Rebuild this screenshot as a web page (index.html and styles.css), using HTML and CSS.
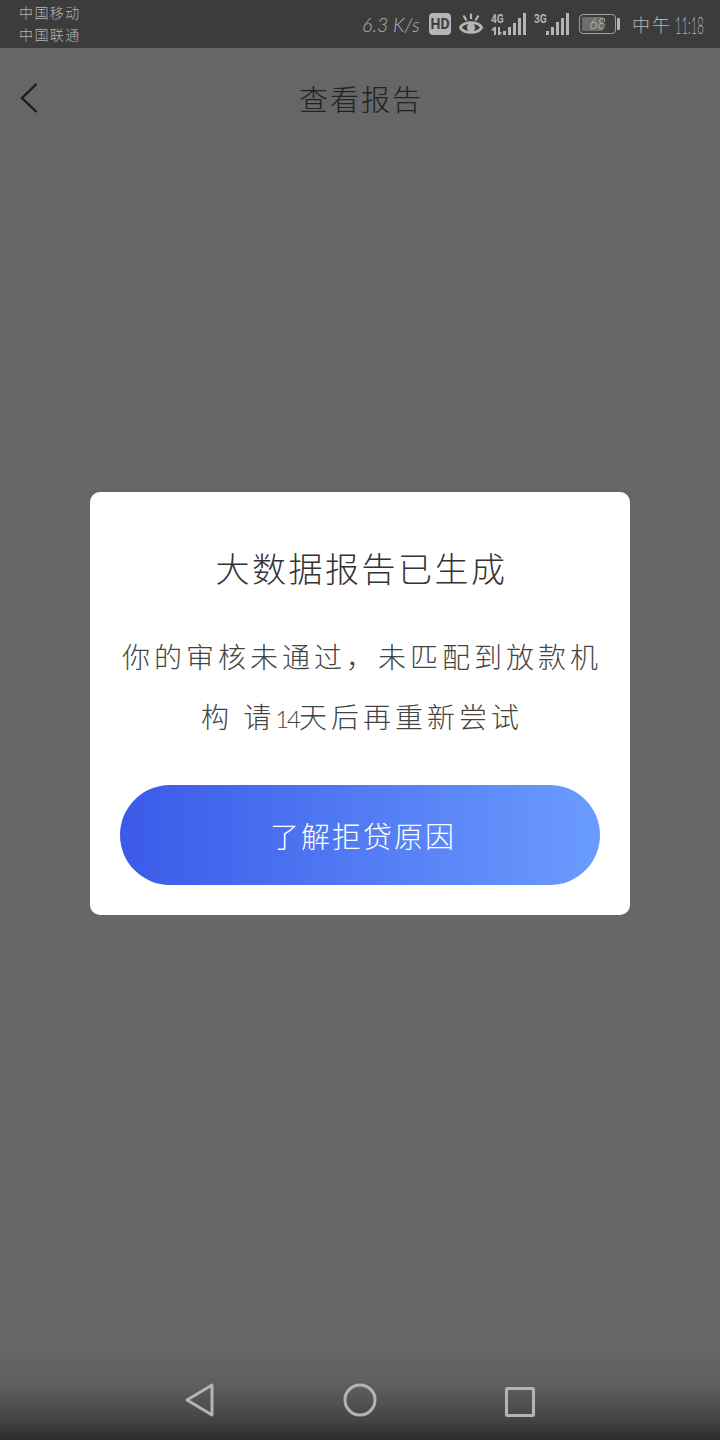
FILE: index.html
```html
<!DOCTYPE html>
<html lang="zh-CN">
<head>
<meta charset="utf-8">
<title>查看报告</title>
<link rel="stylesheet" href="styles.css">
</head>
<body>
<div class="screen">
  <header class="status">
    <div class="carriers"><span>中国移动</span><span>中国联通</span></div>
    <div class="status-right">
      <span class="speed">6.3 K/s</span>
      <span class="hd">HD</span>
      <svg class="eye" width="24" height="22" viewBox="0 0 24 22" fill="none" stroke="#b4b4b4">
        <path d="M1.2 14.5C5 8 19 8 22.8 14.5C19 21 5 21 1.2 14.5Z" stroke-width="2.6"/>
        <circle cx="12" cy="14.5" r="4" fill="#b4b4b4" stroke="none"/>
        <path d="M4.5 2.5L7.5 7.5M12 0.5V6M19.5 2.5L16.5 7.5" stroke-width="2.2"/>
      </svg>
      <span class="sim sim-4g">
        <span class="net">4G</span>
        <svg class="arrows" width="11" height="8" viewBox="0 0 11 8" fill="#b4b4b4">
          <path d="M3 0V8H5V0ZM3 0L0 3.5H3Z"/><path d="M7 0V8H9V0ZM9 8L11 5H9Z"/>
        </svg>
        <svg class="bars" width="23" height="22" viewBox="0 0 23 22" fill="#b4b4b4">
          <rect x="0" y="18" width="3" height="4"/><rect x="5" y="14" width="3" height="8"/><rect x="10" y="10" width="3" height="12"/><rect x="15" y="5" width="3" height="17"/><rect x="20" y="0" width="3" height="22"/>
        </svg>
      </span>
      <span class="sim sim-3g">
        <span class="net">3G</span>
        <svg class="bars" width="23" height="22" viewBox="0 0 23 22" fill="#b4b4b4">
          <rect x="0" y="18" width="3" height="4"/><rect x="5" y="14" width="3" height="8"/><rect x="10" y="9" width="3" height="13"/><rect x="15" y="5" width="3" height="17"/><rect x="20" y="0" width="3" height="22"/>
        </svg>
      </span>
      <span class="battery"><span class="cell"><span class="level"></span><span class="pct">68</span></span><span class="cap"></span></span>
      <span class="time"><span class="noon">中午</span><span class="clock">11:18</span></span>
    </div>
  </header>
  <nav class="topbar">
    <svg class="back" width="18" height="30" viewBox="0 0 18 30" fill="none" stroke="#1c1c1c" stroke-width="2.4">
      <path d="M16.5 1L2 15L16.5 29"/>
    </svg>
    <h1 class="page-title">查看报告</h1>
  </nav>
  <div class="overlay">
    <section class="dialog">
      <h2 class="dialog-title">大数据报告已生成</h2>
      <p class="dialog-text">你的审核未通过，未匹配到放款机构 请<span class="digits">14</span>天后再重新尝试</p>
      <button class="cta">了解拒贷原因</button>
    </section>
  </div>
  <footer class="navbar">
    <svg width="30" height="34" viewBox="0 0 30 34" fill="none" stroke="#b4b4b4" stroke-width="3" stroke-linejoin="round"><path d="M2 17L27 2V32Z"/></svg>
    <svg width="34" height="34" viewBox="0 0 34 34" fill="none" stroke="#b4b4b4" stroke-width="3"><circle cx="17" cy="17" r="15"/></svg>
    <svg width="30" height="30" viewBox="0 0 30 30" fill="none" stroke="#b4b4b4" stroke-width="3" stroke-linejoin="round"><rect x="1.5" y="1.5" width="27" height="27" rx="1"/></svg>
  </footer>
</div>
</body>
</html>
```
FILE: styles.css
```css
* { box-sizing: border-box; }
html, body { margin: 0; padding: 0; }
body {
  width: 720px;
  height: 1440px;
  overflow: hidden;
  background: #666;
  font-family: "Noto Sans CJK SC", "Noto Sans", sans-serif;
}
.screen {
  position: relative;
  width: 720px;
  height: 1440px;
  display: flex;
  flex-direction: column;
  background: #666;
}
.status {
  height: 48px;
  flex: none;
  display: flex;
  align-items: center;
  padding: 0 17px 0 19px;
  background: #3c3c3c;
  color: #b4b4b4;
}
.carriers {
  display: flex;
  flex-direction: column;
  font-size: 14px;
  line-height: 22px;
  letter-spacing: 1.4px;
  padding-bottom: 3px;
  font-weight: 300;
}
.status-right {
  margin-left: auto;
  display: flex;
  align-items: center;
  height: 100%;
}
.speed {
  width: 59px;
  margin-right: 8px;
  font-family: "Lato", sans-serif;
  font-style: italic;
  font-weight: 300;
  font-size: 19.5px;
  white-space: nowrap;
}
.hd {
  width: 22px;
  height: 22px;
  margin-right: 8px;
  background: #b4b4b4;
  border-radius: 4px;
  color: #3c3c3c;
  font-family: "Roboto", sans-serif;
  font-weight: 700;
  font-size: 14px;
  line-height: 22px;
  text-align: center;
}
.eye { margin-right: 8px; }
.sim {
  position: relative;
  height: 22px;
  display: block;
  width: 35px;
}
.sim-4g { margin-right: 8px; }
.sim-3g { margin-right: 10px; }
.net {
  position: absolute;
  left: 0;
  top: -1px;
  font-family: "Roboto", sans-serif;
  font-weight: 700;
  font-size: 13px;
  line-height: 13px;
  color: #b4b4b4;
  transform: scaleX(0.78);
  transform-origin: left center;
}
.arrows { position: absolute; left: 0; bottom: 0; }
.bars { position: absolute; right: 0; bottom: 0; }
.battery {
  display: flex;
  align-items: center;
  margin-right: 12px;
}
.cell {
  position: relative;
  width: 37px;
  height: 20px;
  border: 1.5px solid #a0a0a0;
  border-radius: 4px;
  padding: 2px;
  display: block;
}
.level {
  display: block;
  width: 68%;
  height: 100%;
  background: #6e6e6e;
  border-radius: 1px;
}
.pct {
  position: absolute;
  inset: 0;
  text-align: center;
  font-family: "Lato", sans-serif;
  font-style: italic;
  font-weight: 300;
  font-size: 15px;
  line-height: 17px;
  color: #c4c4c4;
}
.cap {
  width: 3px;
  height: 12px;
  margin-left: 1px;
  background: #b4b4b4;
  border-radius: 1px;
}
.time {
  display: flex;
  align-items: center;
  width: 71px;
  white-space: nowrap;
}
.noon {
  font-size: 18px;
  letter-spacing: 2px;
  font-weight: 300;
}
.clock {
  display: inline-block;
  margin-left: 3px;
  font-family: "Lato", sans-serif;
  font-weight: 300;
  font-size: 24px;
  transform: scaleX(0.47);
  transform-origin: left center;
}
.topbar {
  position: relative;
  height: 100px;
  flex: none;
  display: flex;
  align-items: center;
  justify-content: center;
}
.back {
  position: absolute;
  left: 20px;
  top: 35px;
}
.page-title {
  margin: 0;
  padding-left: 2px;
  font-size: 29px;
  line-height: 40px;
  letter-spacing: 2px;
  font-weight: 300;
  color: #222;
}
.overlay {
  position: absolute;
  inset: 0;
  display: flex;
  align-items: flex-start;
  justify-content: center;
  padding-top: 492px;
}
.dialog {
  width: 540px;
  padding: 46px 30px 30px;
  background: #fff;
  border-radius: 10px;
  text-align: center;
}
.dialog-title {
  margin: 0;
  padding-left: 3px;
  font-size: 34px;
  line-height: 60px;
  letter-spacing: 2.5px;
  font-weight: 300;
  color: #333;
}
.dialog-text {
  margin: 28px -2px 0;
  padding-left: 4px;
  height: 120px;
  font-size: 28px;
  line-height: 60px;
  letter-spacing: 4px;
  font-weight: 300;
  color: #444;
}
.digits {
  font-family: "Lato", sans-serif;
  font-size: 24px;
  line-height: 1;
  letter-spacing: -2px;
}
.cta {
  display: block;
  width: 480px;
  height: 100px;
  margin-top: 39px;
  padding: 0 0 0 6px;
  border: 0;
  border-radius: 50px;
  background: linear-gradient(90deg, #3a5ae8 0%, #6a9cff 100%);
  color: #fff;
  font-family: inherit;
  font-size: 29px;
  letter-spacing: 2px;
  font-weight: 300;
}
.navbar {
  margin-top: auto;
  height: 90px;
  flex: none;
  display: flex;
  align-items: flex-end;
  justify-content: center;
  gap: 128px;
  padding-bottom: 23px;
  background: linear-gradient(180deg, #666 0%, #5e5e5e 40%, #444 78%, #2c2c2c 100%);
}
```
